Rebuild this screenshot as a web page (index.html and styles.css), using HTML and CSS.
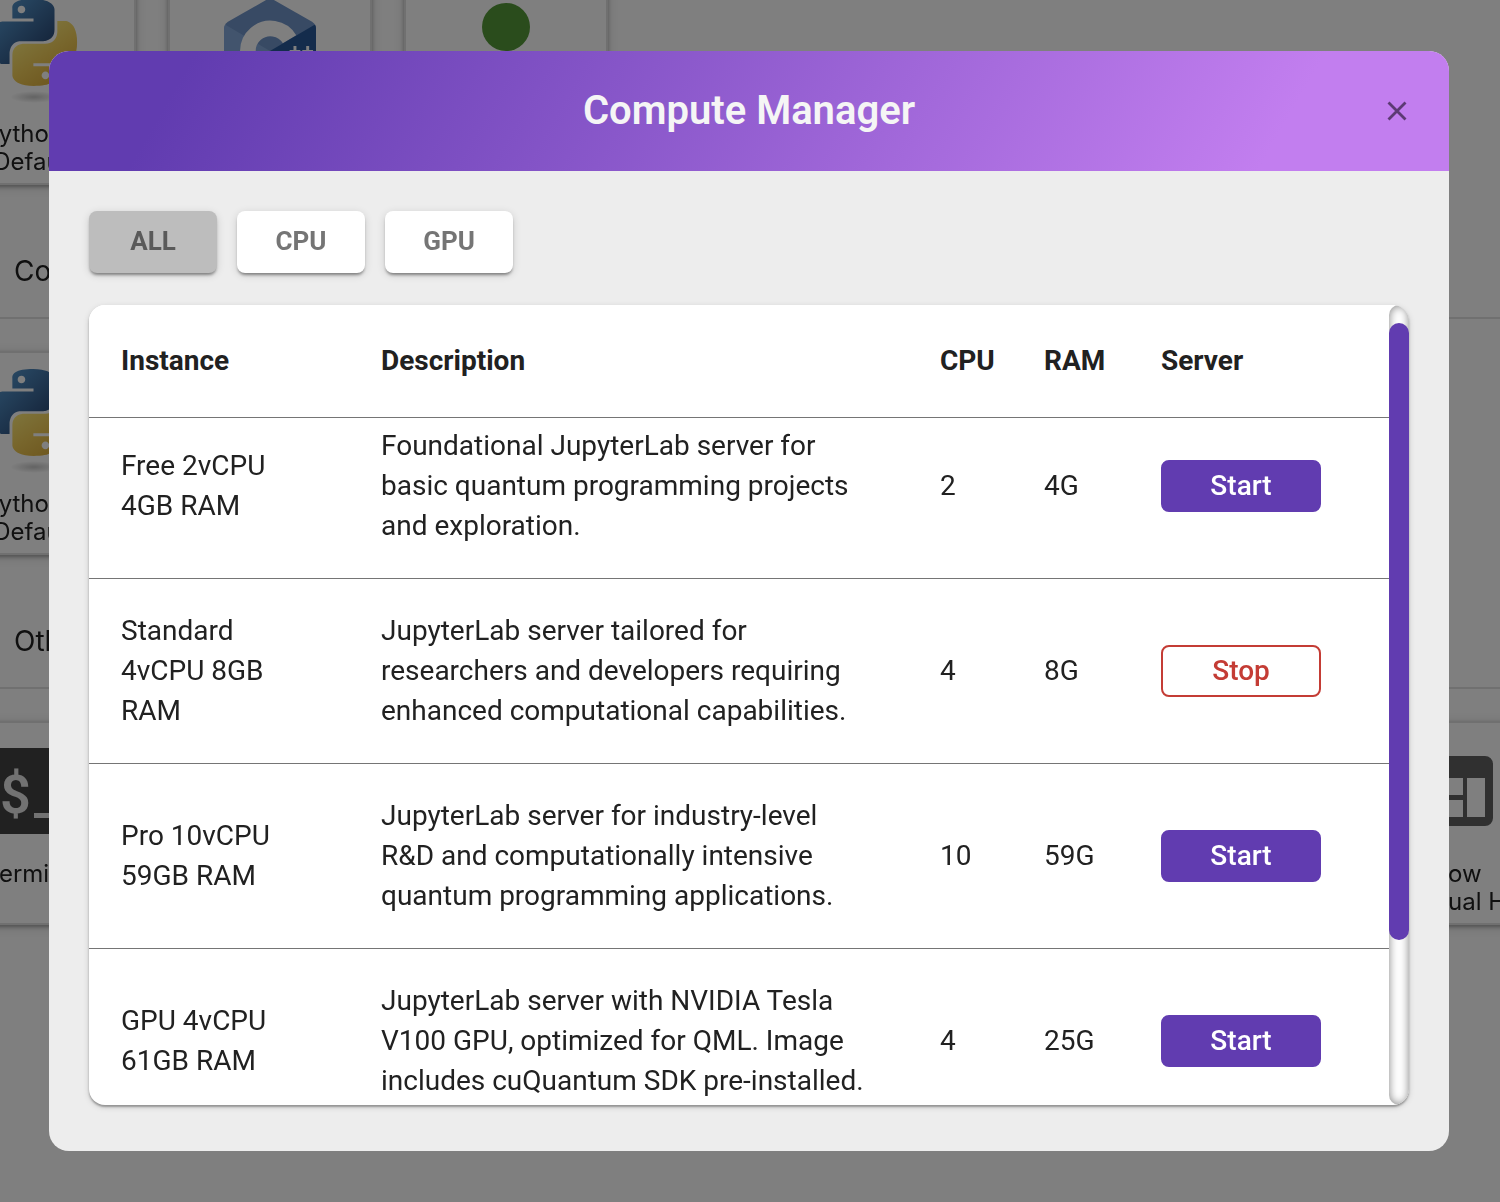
FILE: index.html
```html
<!DOCTYPE html>
<html lang="en">
<head>
<meta charset="utf-8">
<meta name="viewport" content="width=device-width, initial-scale=1">
<title>Compute Manager</title>
<link rel="stylesheet" href="styles.css">
</head>
<body>
<svg class="sprite" aria-hidden="true">
  <defs>
    <linearGradient id="py-blue" x1="0" y1="0" x2="1" y2="1">
      <stop offset="0" stop-color="#5a9fd4"/><stop offset="0.35" stop-color="#4880b4"/><stop offset="0.75" stop-color="#2f5280"/>
    </linearGradient>
    <linearGradient id="py-yellow" x1="0.2" y1="0.1" x2="0.8" y2="1">
      <stop offset="0" stop-color="#fff080"/><stop offset="0.5" stop-color="#f0cc58"/><stop offset="1" stop-color="#d8a838"/>
    </linearGradient>
    <radialGradient id="py-shadow"><stop offset="0" stop-color="#000" stop-opacity="0.22"/><stop offset="1" stop-color="#000" stop-opacity="0"/></radialGradient>
    <symbol id="python" viewBox="0 0 88 104">
      <ellipse cx="44" cy="98" rx="24" ry="6" fill="url(#py-shadow)"/>
      <g transform="scale(3.62)">
        <path fill="url(#py-blue)" d="M14.25.18l.9.2.73.26.59.3.45.32.34.34.25.34.16.33.1.3.04.26.02.2-.01.13V8.5l-.05.63-.13.55-.21.46-.26.38-.3.31-.33.25-.35.19-.35.14-.33.1-.3.07-.26.04-.21.02H8.77l-.69.05-.59.14-.5.22-.41.27-.33.32-.27.35-.2.36-.15.37-.1.35-.07.32-.04.27-.02.21v3.06H3.17l-.21-.03-.28-.07-.32-.12-.35-.18-.36-.26-.36-.36-.35-.46-.32-.59-.28-.73-.21-.88-.14-1.05-.05-1.23.06-1.22.16-1.04.24-.87.32-.71.36-.57.4-.44.42-.33.42-.24.4-.16.36-.1.32-.05.24-.01h.16l.06.01h8.16v-.83H6.18l-.01-2.75-.02-.37.05-.34.11-.31.17-.28.25-.26.31-.23.38-.2.44-.18.51-.15.58-.12.64-.1.71-.06.77-.04.84-.02 1.27.05zm-6.3 1.98l-.23.33-.08.41.08.41.23.34.33.22.41.09.41-.09.33-.22.23-.34.08-.41-.08-.41-.23-.33-.33-.22-.41-.09-.41.09z"/>
        <path fill="url(#py-yellow)" d="M21.04 6.11l.28.06.32.12.35.18.36.27.36.35.35.47.32.59.28.73.21.88.14 1.04.05 1.23-.06 1.23-.16 1.04-.24.86-.32.71-.36.57-.4.45-.42.33-.42.24-.4.16-.36.09-.32.05-.24.02-.16-.01h-8.22v.82h5.84l.01 2.76.02.36-.05.34-.11.31-.17.29-.25.25-.31.24-.38.2-.44.17-.51.15-.58.13-.64.09-.71.07-.77.04-.84.01-1.27-.04-1.07-.14-.9-.2-.73-.25-.59-.3-.45-.33-.34-.34-.25-.34-.16-.33-.1-.3-.04-.25-.02-.2.01-.13v-5.34l.05-.64.13-.54.21-.46.26-.38.3-.32.33-.24.35-.2.35-.14.33-.1.3-.06.26-.04.21-.02.13-.01h5.84l.69-.05.59-.14.5-.21.41-.28.33-.32.27-.35.2-.36.15-.36.1-.35.07-.32.04-.28.02-.21V6.07h2.09l.14.01zm-6.47 14.25l-.23.33-.08.41.08.41.23.33.33.23.41.08.41-.08.33-.23.23-.33.08-.41-.08-.41-.23-.33-.33-.23-.41-.08-.41.08z"/>
      </g>
    </symbol>
  </defs>
</svg>

<main class="launcher" aria-hidden="true">
  <div class="launcher-content">
    <section class="launcher-section">
      <div class="cards">
        <div class="card">
          <div class="card-icon"><svg width="88" height="104"><use href="#python"/></svg></div>
          <p class="card-label">Python 3<br>[Default]</p>
        </div>
        <div class="card">
          <div class="card-icon">
            <svg width="92" height="106" viewBox="0 0 94 108">
              <path fill="#7094c8" d="M43 2q4-2 8 0l39 22q4 3 4 7v46q0 4-4 7L51 106q-4 2-8 0L4 84q-4-3-4-7V31q0-4 4-7z"/>
              <path fill="#92b8e6" d="M1 27L47 54 2 82q-2-2-2-5V31q0-2 1-4z" opacity="0.6"/>
              <path fill="none" stroke="#fff" stroke-width="16" d="M67 42a23 23 0 1 0 0 24"/>
              <path fill="#285898" d="M47 54l46-27q1 2 1 4v46q0 3-2 5z"/>
              <path fill="#fff" d="M71 49h3v4h4v3h-4v4h-3v-4h-4v-3h4zM84 49h3v4h4v3h-4v4h-3v-4h-4v-3h4z"/>
            </svg>
          </div>
        </div>
        <div class="card">
          <div class="card-icon"><svg width="96" height="96" viewBox="0 0 96 96"><circle cx="48" cy="24" r="24" fill="#549838"/></svg></div>
        </div>
      </div>
    </section>

    <section class="launcher-section">
      <h2 class="section-title">Console</h2>
      <div class="cards">
        <div class="card">
          <div class="card-icon"><svg width="88" height="104"><use href="#python"/></svg></div>
          <p class="card-label">Python 3<br>[Default]</p>
        </div>
      </div>
    </section>

    <section class="launcher-section">
      <h2 class="section-title">Other</h2>
      <div class="cards">
        <div class="card">
          <div class="card-icon">
            <svg width="88" height="86" viewBox="0 0 88 86">
              <rect width="88" height="86" fill="#424242"/>
              <text class="prompt" x="10" y="65">$</text>
              <rect x="44" y="65" width="30" height="5" fill="#e4e4e4"/>
            </svg>
          </div>
          <p class="card-label">Terminal</p>
        </div>
        <div class="card card-last">
          <div class="card-icon">
            <svg width="86" height="70" viewBox="0 0 86 70">
              <path fill="#616161" fill-rule="evenodd" d="M8 0h70a8 8 0 0 1 8 8v54a8 8 0 0 1-8 8H8a8 8 0 0 1-8-8V8a8 8 0 0 1 8-8zM8 22v17h48V22zM8 44v17h48V44zM60 22v39h18V22z"/>
            </svg>
          </div>
          <p class="card-label">Show<br>Contextual Help</p>
        </div>
      </div>
    </section>
  </div>
</main>

<div class="backdrop">
  <div class="dialog" role="dialog" aria-modal="true" aria-labelledby="dialog-title">
    <header class="dialog-header">
      <h1 class="dialog-title" id="dialog-title">Compute Manager</h1>
      <button class="close" type="button" aria-label="Close">
        <svg width="20" height="20" viewBox="0 0 20 20"><path d="M1.500 1.500l17 17M18.500 1.500l-17 17" stroke="currentColor" stroke-width="2.800" fill="none"/></svg>
      </button>
    </header>
    <div class="dialog-body">
      <div class="filters" role="group" aria-label="Instance type">
        <button class="filter filter-active" type="button" aria-pressed="true">ALL</button>
        <button class="filter" type="button" aria-pressed="false">CPU</button>
        <button class="filter" type="button" aria-pressed="false">GPU</button>
      </div>
      <div class="table-panel">
        <div class="table-scroll" id="instances">
          <table class="instances">
            <colgroup>
              <col class="col-instance"><col class="col-description"><col class="col-cpu"><col class="col-ram"><col class="col-server">
            </colgroup>
            <thead>
              <tr><th scope="col">Instance</th><th scope="col">Description</th><th scope="col">CPU</th><th scope="col">RAM</th><th scope="col">Server</th></tr>
            </thead>
            <tbody>
              <tr>
                <td>Free 2vCPU 4GB RAM</td>
                <td>Foundational JupyterLab server for basic quantum programming projects and exploration.</td>
                <td>2</td><td>4G</td>
                <td><button class="action start" type="button">Start</button></td>
              </tr>
              <tr>
                <td>Standard 4vCPU 8GB RAM</td>
                <td>JupyterLab server tailored for researchers and developers requiring enhanced computational capabilities.</td>
                <td>4</td><td>8G</td>
                <td><button class="action stop" type="button">Stop</button></td>
              </tr>
              <tr>
                <td>Pro 10vCPU 59GB RAM</td>
                <td>JupyterLab server for industry-level R&amp;D and computationally intensive quantum programming applications.</td>
                <td>10</td><td>59G</td>
                <td><button class="action start" type="button">Start</button></td>
              </tr>
              <tr>
                <td>GPU 4vCPU 61GB RAM</td>
                <td>JupyterLab server with NVIDIA Tesla V100 GPU, optimized for QML. Image includes cuQuantum SDK pre-installed.</td>
                <td>4</td><td>25G</td>
                <td><button class="action start" type="button">Start</button></td>
              </tr>
            </tbody>
          </table>
        </div>
        <div class="scroll-track" aria-hidden="true">
          <div class="scroll-thumb" id="thumb"></div>
        </div>
      </div>
    </div>
  </div>
</div>
<script src="script.js"></script>
</body>
</html>
```
FILE: styles.css
```css
* {
  box-sizing: border-box;
}

body {
  margin: 0;
  height: 100vh;
  overflow: hidden;
  background: #fff;
  color: #212121;
  font-family: Roboto, "Liberation Sans", sans-serif;
  font-size: 28px;
  line-height: 40px;
}

button {
  font: inherit;
  cursor: pointer;
}

.sprite {
  position: absolute;
  width: 0;
  height: 0;
}

/* Launcher behind the dialog */
.launcher {
  position: fixed;
  inset: 0;
  overflow: hidden;
  font-family: Inter, "Liberation Sans", sans-serif;
}

.launcher-content {
  margin: -19px 0 0 -68px;
}

.section-title {
  margin: 0 0 32px;
  padding: 66px 0 26px 82px;
  border-bottom: 2px solid #e0e0e0;
  font-size: 28px;
  font-weight: 400;
  line-height: 40px;
}

.cards {
  display: grid;
  grid-template-columns: repeat(7, 204px);
  gap: 32px;
}

.card {
  height: 204px;
  border: 2px solid #e0e0e0;
  background: #fff;
  box-shadow: 0 2px 4px rgba(0, 0, 0, 0.3), 0 2px 12px rgba(0, 0, 0, 0.15);
}

.card-last {
  grid-column: 7;
}

.card-icon {
  display: flex;
  align-items: center;
  justify-content: center;
  height: 136px;
}

.card-label {
  margin: 0;
  padding-top: 1px;
  font-size: 24px;
  line-height: 28px;
  text-align: center;
}

.prompt {
  font: 600 54px Roboto, sans-serif;
  fill: #e4e4e4;
}

/* Dialog */
.backdrop {
  position: fixed;
  inset: 0;
  display: flex;
  padding: 51px 51px 51px 49px;
  background: rgba(0, 0, 0, 0.5);
}

.dialog {
  flex: 1;
  display: flex;
  flex-direction: column;
  min-width: 0;
  overflow: hidden;
  border-radius: 20px;
  background: #ededed;
}

.dialog-header {
  display: grid;
  grid-template-columns: 1fr auto 1fr;
  align-items: center;
  padding: 30px 40px;
  background: linear-gradient(120deg, #613cb0 10%, #c27eef 87%);
}

.dialog-title {
  grid-column: 2;
  margin: 0;
  color: #f5f5f5;
  font-size: 40px;
  font-weight: 600;
  line-height: 60px;
}

.close {
  display: flex;
  justify-self: end;
  padding: 2px;
  border: 0;
  background: none;
  color: #5c3a74;
}

.dialog-body {
  flex: 1;
  display: flex;
  flex-direction: column;
  gap: 32px;
  min-height: 0;
  padding: 40px 40px 46px;
}

.filters {
  display: flex;
  gap: 20px;
}

.filter {
  width: 128px;
  height: 62px;
  padding: 0 0 2px;
  border: 0;
  border-radius: 8px;
  background: #fff;
  color: #757575;
  font-size: 26px;
  font-weight: 700;
  box-shadow: 0 3px 3px -1px rgba(0, 0, 0, 0.4), 0 2px 8px rgba(0, 0, 0, 0.14);
}

.filter-active {
  background: #bdbdbd;
  color: #5a5a5a;
}

.table-panel {
  flex: 1;
  display: flex;
  min-height: 0;
  overflow: hidden;
  border-radius: 16px;
  background: #fff;
  box-shadow: 0 2px 2px rgba(0, 0, 0, 0.3), 0 2px 6px rgba(0, 0, 0, 0.15);
}

.table-scroll {
  flex: 1;
  overflow-x: hidden;
  overflow-y: auto;
  scrollbar-width: none;
}

.scroll-track {
  flex: none;
  width: 20px;
  border-radius: 10px;
  background: #fff;
  box-shadow: inset 0 0 10px rgba(0, 0, 0, 0.5);
}

.scroll-thumb {
  height: 77%;
  border-radius: 10px;
  background: #613cb0;
}

.instances {
  width: 100%;
  margin-bottom: 185px;
  table-layout: fixed;
  border-collapse: separate;
  border-spacing: 0;
}

.col-instance,
.col-server {
  width: 20%;
}

.col-description {
  width: 43%;
}

.col-cpu {
  width: 8%;
}

.col-ram {
  width: 9%;
}

.instances th,
.instances td {
  padding: 32px 40px 32px 32px;
  border-bottom: 1px solid #757575;
  text-align: left;
  vertical-align: middle;
}

.instances th {
  position: sticky;
  top: 0;
  padding: 36px 0 36px 32px;
  background: #fff;
  font-weight: 700;
}

.instances td:nth-child(3),
.instances td:nth-child(4) {
  padding-right: 0;
}

.action {
  display: block;
  width: 160px;
  height: 52px;
  padding: 0;
  border: 2px solid #613cb0;
  border-radius: 8px;
  font-weight: 500;
}

.start {
  background: #613cb0;
  color: #fff;
}

.stop {
  border-color: #c43c35;
  background: #fff;
  color: #c43c35;
}
```
FILE: script.js
```js
const list = document.getElementById("instances");
const thumb = document.getElementById("thumb");

// Size and place the thumb from the list's scroll position.
function updateThumb() {
  const ratio = list.clientHeight / list.scrollHeight;
  thumb.style.height = Math.round(list.clientHeight * ratio) + "px";
  thumb.style.transform = "translateY(" + Math.round(list.scrollTop * ratio) + "px)";
}

list.addEventListener("scroll", updateThumb);
window.addEventListener("resize", updateThumb);

// Open the list slightly scrolled; the header row stays in view.
list.scrollTop = 24;
updateThumb();
```
